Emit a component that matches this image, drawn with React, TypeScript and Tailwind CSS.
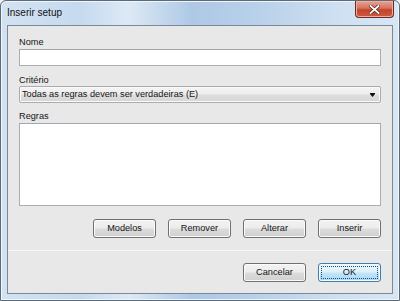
import React from 'react';

const btnBase =
  'w-[63px] h-[19px] rounded-[3px] flex items-center justify-center text-[9.2px] text-[#151515] leading-none';

const GrayButton: React.FC<{ label: string }> = ({ label }) => (
  <button
    className={`${btnBase} border border-[#707070] bg-[linear-gradient(to_bottom,#f3f3f3_0%,#ececec_48%,#dcdcdc_52%,#d0d0d0_100%)] shadow-[inset_0_0_0_1px_#fbfbfb]`}
  >
    {label}
  </button>
);

const DefaultButton: React.FC<{ label: string }> = ({ label }) => (
  <button
    className={`${btnBase} border border-[#3c7fb1] bg-[linear-gradient(to_bottom,#ecf6fd_0%,#dcf0fc_48%,#c3e5f9_52%,#a9d7f3_100%)] shadow-[inset_0_0_0_1px_#f4fbff] p-[2px]`}
  >
    <span className="w-full h-full flex items-center justify-center border border-dotted border-[#2b4a66]">
      {label}
    </span>
  </button>
);

const App: React.FC = () => {
  return (
    <div
      className="w-[400px] h-[301px] overflow-hidden bg-[#f0f0f0]"
      style={{ fontFamily: '"Liberation Sans", Arial, sans-serif' }}
    >
      <div className="w-[400px] h-[301px] flex flex-col rounded-t-[6px] border border-[#5d6a78] bg-[linear-gradient(to_right,#d2e2f2_0%,#c6daef_20%,#dde9f5_32%,#aec9e6_48%,#b9d1ea_65%,#cfe0f1_85%,#d8e6f4_100%)] shadow-[inset_0_0_0_1px_#eef5fc]">
        {/* Title bar */}
        <div className="h-[24px] flex items-start justify-between">
          <span className="pl-[6px] pt-[6px] text-[10px] leading-[12px] text-[#111]">Inserir setup</span>
          <div className="mr-[5px] w-[39px] h-[17px] rounded-b-[4px] border border-t-0 border-[#6b2b22] bg-[linear-gradient(to_bottom,#e9a293_0%,#d6735d_45%,#c2432b_55%,#cf5b40_100%)] shadow-[inset_0_0_0_1px_#f0ad9f] flex items-center justify-center">
            <svg width="11" height="9" viewBox="0 0 11 9">
              <path d="M1.5 1 L9.5 8 M9.5 1 L1.5 8" stroke="#4a1e18" strokeWidth="3.2" strokeLinecap="square" />
              <path d="M1.5 1 L9.5 8 M9.5 1 L1.5 8" stroke="#ffffff" strokeWidth="1.8" strokeLinecap="square" />
            </svg>
          </div>
        </div>

        {/* Client area */}
        <div className="flex-1 mx-[6px] mb-[6px] border border-[#7a8898] bg-[#e8e8e8] flex flex-col text-[9.2px] text-[#151515]">
          <div className="px-[11px] pt-[11px] flex flex-col">
            <span className="h-[11px] leading-[11px]">Nome</span>
            <div className="mt-[1px] h-[17px] bg-white border border-[#abadb3] border-t-[#a3a6ad]" />

            <span className="mt-[9px] h-[11px] leading-[11px]">Critério</span>
            <div className="h-[17px] rounded-[2px] border border-[#acacac] bg-[linear-gradient(to_bottom,#f4f4f4_0%,#ededed_48%,#dedede_52%,#d6d6d6_100%)] shadow-[inset_0_0_0_1px_#fafafa] flex items-center justify-between pl-[2px] pr-[5px]">
              <span className="leading-[11px]">Todas as regras devem ser verdadeiras (E)</span>
              <svg width="5" height="4" viewBox="0 0 5 4">
                <path d="M0 0 H5 V1 H0 Z M0 1 H5 L2.5 4 Z" fill="#111" />
              </svg>
            </div>

            <span className="mt-[8px] h-[11px] leading-[11px]">Regras</span>
            <div className="mt-[1px] h-[83px] bg-white border border-[#abadb3] border-t-[#a3a6ad]" />

            <div className="mt-[13px] flex justify-end gap-[12px]">
              <GrayButton label="Modelos" />
              <GrayButton label="Remover" />
              <GrayButton label="Alterar" />
              <GrayButton label="Inserir" />
            </div>
          </div>

          <div className="mt-[12px] border-t border-[#f6f6f6] px-[11px] pt-[12px] flex justify-end gap-[12px]">
            <GrayButton label="Cancelar" />
            <DefaultButton label="OK" />
          </div>
        </div>
      </div>
    </div>
  );
};

export default App;
